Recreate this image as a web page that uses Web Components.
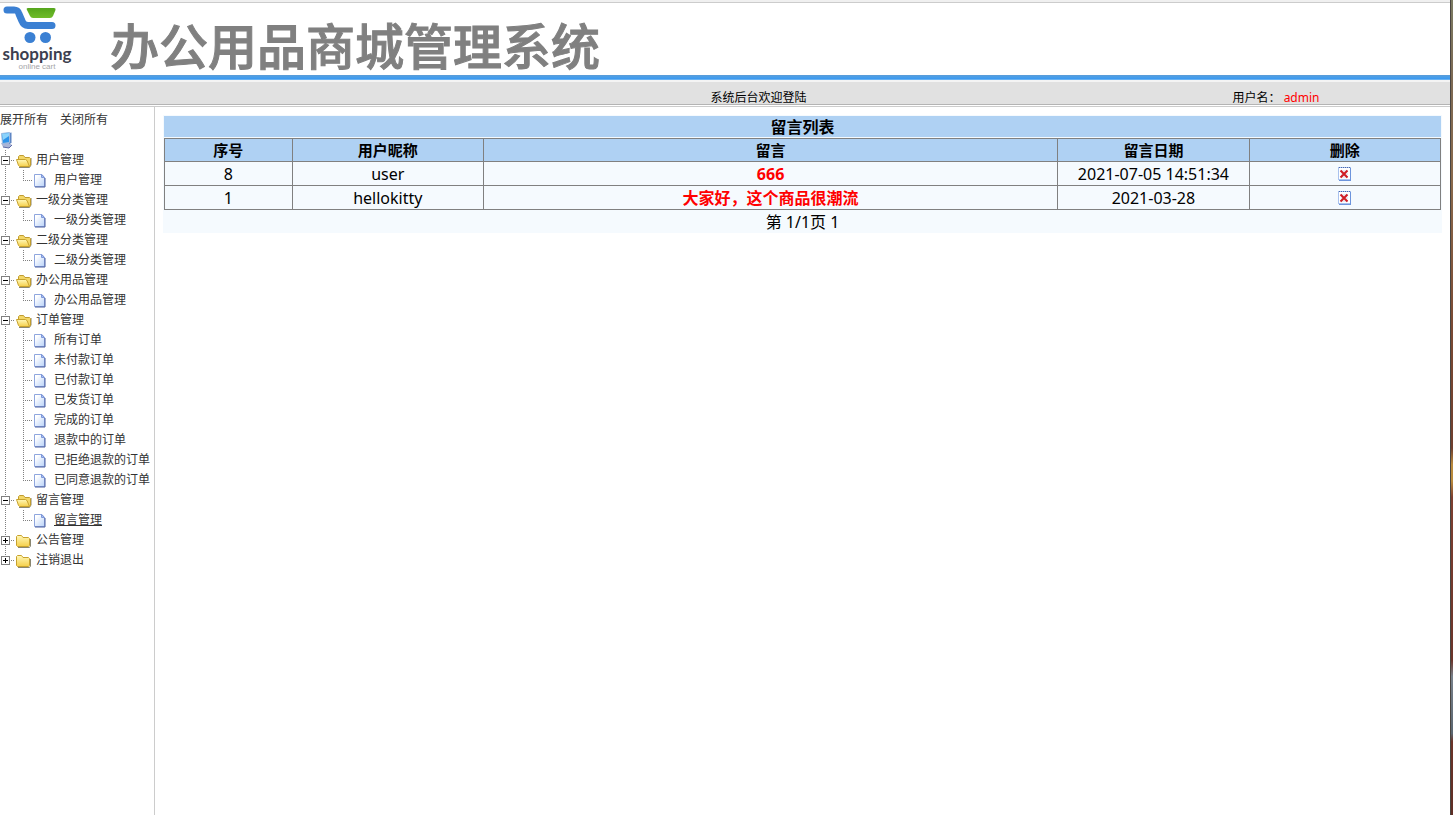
<!DOCTYPE html>
<html lang="zh-CN">
<head>
<meta charset="utf-8">
<title>办公用品商城管理系统</title>
<style>
    html, body {
        height: 100%;
        margin: 0;
    }

    body {
        font-family: "Noto Sans", "Noto Sans CJK SC", sans-serif;
        font-size: 16px;
        color: #000;
        background: #fff;
    }
</style>
</head>
<body>
<admin-shell>
    <admin-header slot="header" user="admin">办公用品商城管理系统</admin-header>

    <tree-menu slot="menu">
        <tree-branch label="用户管理" open>
            <tree-leaf last>用户管理</tree-leaf>
        </tree-branch>
        <tree-branch label="一级分类管理" open>
            <tree-leaf last>一级分类管理</tree-leaf>
        </tree-branch>
        <tree-branch label="二级分类管理" open>
            <tree-leaf last>二级分类管理</tree-leaf>
        </tree-branch>
        <tree-branch label="办公用品管理" open>
            <tree-leaf last>办公用品管理</tree-leaf>
        </tree-branch>
        <tree-branch label="订单管理" open>
            <tree-leaf>所有订单</tree-leaf>
            <tree-leaf>未付款订单</tree-leaf>
            <tree-leaf>已付款订单</tree-leaf>
            <tree-leaf>已发货订单</tree-leaf>
            <tree-leaf>完成的订单</tree-leaf>
            <tree-leaf>退款中的订单</tree-leaf>
            <tree-leaf>已拒绝退款的订单</tree-leaf>
            <tree-leaf last>已同意退款的订单</tree-leaf>
        </tree-branch>
        <tree-branch label="留言管理" open>
            <tree-leaf last current>留言管理</tree-leaf>
        </tree-branch>
        <tree-branch label="公告管理"></tree-branch>
        <tree-branch label="注销退出" last></tree-branch>
    </tree-menu>

    <message-table></message-table>
</admin-shell>

<script>
class AdminShell extends HTMLElement {
    constructor() {
        super();
        this.attachShadow({ mode: 'open' });
    }

    getStyles() {
        return `
            <style>
                :host {
                    display: grid;
                    grid-template-columns: 1fr 3px;
                    min-height: 100%;
                }

                .window {
                    display: flex;
                    flex-direction: column;
                    min-width: 0;
                }

                .frames {
                    display: flex;
                    flex: 1;
                    border-top: 1px solid #ccc;
                }

                nav {
                    width: 154px;
                    flex: none;
                    border-right: 1px solid #ccc;
                }

                main {
                    flex: 1;
                    min-width: 0;
                    padding: 8px;
                }

                .edge {
                    box-sizing: border-box;
                    border-left: 1px solid #4a4542;
                    background: linear-gradient(#7b7a62, #7d6a54 10%, #8a6a4c 22%, #7a4a34 40%, #6f3f2e 55%, #b98a3c 57%, #b98a3c 59%, #7d3f30 61%, #6b352b 81%, #77808a 83%, #5b6670 90%, #6b3328 91%, #5f2f26);
                }
            </style>
        `;
    }

    connectedCallback() {
        this.shadowRoot.innerHTML = `
            ${this.getStyles()}
            <div class="window">
                <slot name="header"></slot>
                <div class="frames">
                    <nav><slot name="menu"></slot></nav>
                    <main><slot></slot></main>
                </div>
            </div>
            <div class="edge"></div>
        `;
    }
}

class ShopLogo extends HTMLElement {
    constructor() {
        super();
        this.attachShadow({ mode: 'open' });
    }

    connectedCallback() {
        this.shadowRoot.innerHTML = `
            <style>
                :host {
                    display: block;
                }

                svg {
                    display: block;
                }
            </style>
            <svg width="76" height="72" viewBox="0 0 76 72">
                <defs>
                    <linearGradient id="basket" x1="0" y1="0" x2="0" y2="1">
                        <stop offset="0" stop-color="#55a51c"/>
                        <stop offset="1" stop-color="#70bc2a"/>
                    </linearGradient>
                </defs>
                <path d="M7 7H14C17 7 18 8 19 11L22 18C23 21 25 22.500 28 22.500H52" fill="none" stroke="#3b80d3" stroke-width="7" stroke-linecap="round" stroke-linejoin="round"/>
                <path d="M28 5H54Q56 5 55.500 7L53 13Q52 15 50 15H33Q31 15 30 13L27 7Q26 5 28 5Z" fill="url(#basket)"/>
                <circle cx="30" cy="34.500" r="5.500" fill="#3b80d3"/>
                <circle cx="45.500" cy="34.500" r="5.500" fill="#3b80d3"/>
                <text x="37" y="57" text-anchor="middle" font-family="Lato, sans-serif" font-size="17" font-weight="700" fill="#3c3f50">shopping</text>
                <text x="37" y="66" text-anchor="middle" font-family="'Liberation Sans', sans-serif" font-size="8" fill="#a5a5a8">online cart</text>
            </svg>
        `;
    }
}

class AdminHeader extends HTMLElement {
    constructor() {
        super();
        this.attachShadow({ mode: 'open' });
    }

    getStyles() {
        return `
            <style>
                :host {
                    display: block;
                    border-top: 2px solid #f0f0f0;
                }

                .banner {
                    display: flex;
                    align-items: center;
                    gap: 34px;
                    height: 72px;
                    border-top: 1px solid #ccc;
                }

                h1 {
                    margin: 0;
                    padding-top: 14px;
                    font-size: 49px;
                    font-weight: 500;
                    line-height: 56px;
                    white-space: nowrap;
                    color: #808080;
                    -webkit-text-stroke: 1px #808080;
                }

                .stripe {
                    height: 5px;
                    background: linear-gradient(#5b9bd5, #4a9fe8 40%, #3d9af0 70%, #7dbcf2);
                }

                .status {
                    display: grid;
                    grid-template-columns: 49% 36% 15%;
                    align-items: end;
                    height: 22px;
                    border-top: 2px solid #f4f4f4;
                    border-bottom: 1px solid #b4b4b4;
                    margin-bottom: 1px;
                    background: #e1e1e1;
                    font-size: 12px;
                    line-height: 12px;
                }

                .welcome {
                    grid-column: 2;
                }

                .user span {
                    color: #f00;
                }
            </style>
        `;
    }

    connectedCallback() {
        this.shadowRoot.innerHTML = `
            ${this.getStyles()}
            <div class="banner">
                <shop-logo></shop-logo>
                <h1><slot></slot></h1>
            </div>
            <div class="stripe"></div>
            <div class="status">
                <div class="welcome">系统后台欢迎登陆</div>
                <div class="user">用户名： <span>${this.getAttribute('user')}</span></div>
            </div>
        `;
    }
}

class TreeMenu extends HTMLElement {
    constructor() {
        super();
        this.attachShadow({ mode: 'open' });
    }

    getStyles() {
        return `
            <style>
                :host {
                    display: block;
                    padding-top: 3px;
                    font-size: 12px;
                    line-height: 20px;
                    color: #333;
                }

                .tools {
                    display: flex;
                    gap: 12px;
                }

                a {
                    color: inherit;
                    text-decoration: none;
                }

                svg {
                    display: block;
                }
            </style>
        `;
    }

    connectedCallback() {
        this.shadowRoot.innerHTML = `
            ${this.getStyles()}
            <div class="tools">
                <a href="#" id="open">展开所有</a>
                <a href="#" id="close">关闭所有</a>
            </div>
            <svg width="14" height="20" viewBox="0 0 14 20">
                <path d="M1 13L8 12L12 15L9 18L3 17Z" fill="#a9b4d6"/>
                <path d="M3 17L9 18L12 15" fill="none" stroke="#5d6aa5"/>
                <path d="M9 3L11.500 2.500V13L9 14Z" fill="#5f86c4"/>
                <path d="M1.500 3.500L9.500 2.500V12.500L2.500 13.500Z" fill="#2d94ea" stroke="#9dbbe0"/>
                <path d="M2 4L9 3V6L3 10Z" fill="#8bd3fb"/>
            </svg>
            <slot></slot>
        `;
        this.shadowRoot.getElementById('open').addEventListener('click', (e) => this.toggleAll(e, true));
        this.shadowRoot.getElementById('close').addEventListener('click', (e) => this.toggleAll(e, false));
    }

    toggleAll(event, open) {
        event.preventDefault();
        this.querySelectorAll('tree-branch').forEach((branch) => branch.toggleAttribute('open', open));
    }
}

class TreeBranch extends HTMLElement {
    static observedAttributes = ['open'];

    constructor() {
        super();
        this.attachShadow({ mode: 'open' });
    }

    getStyles() {
        // the dotted trunk runs down the left of every branch but the last
        return `
            <style>
                :host {
                    display: block;
                    background: repeating-linear-gradient(#808080 0 1px, transparent 1px 2px) 5px 0 / 1px 100% no-repeat;
                }

                :host([last]) {
                    background-size: 1px 10px;
                }

                .row {
                    display: flex;
                    height: 20px;
                }

                button {
                    display: block;
                    padding: 0;
                    border: 0;
                    background: none;
                }

                svg {
                    display: block;
                }

                a {
                    padding-left: 4px;
                    color: inherit;
                    line-height: 20px;
                    text-decoration: none;
                    white-space: nowrap;
                }

                .children {
                    padding-left: 14px;
                }
            </style>
        `;
    }

    getFolder(open) {
        const shade = `
            <defs>
                <linearGradient id="shade" x1="0" y1="0" x2="0" y2="1">
                    <stop offset="0" stop-color="#fff8b8"/>
                    <stop offset="1" stop-color="#f5cf4a"/>
                </linearGradient>
            </defs>
        `;

        if (open) {
            return `
                ${shade}
                <path d="M5 17.500H15.500L17 15V8" fill="none" stroke="#8a8670"/>
                <path d="M4.500 12V6.500L5.500 5.500H9.500L11 7.500H15.500L16.500 8.500V15.500L15 16.500Z" fill="#f3d768" stroke="#c09c30"/>
                <path d="M2.500 9.500H11.500L13 10.500L15.500 16.500H5.500L4.500 15.500Z" fill="url(#shade)" stroke="#c8a22c"/>
            `;
        }
        return `
            ${shade}
            <path d="M4 17.500H15.500L16.500 16V9" fill="none" stroke="#8a8670"/>
            <path d="M2.500 15.500V6.500L3.500 5.500H7.500L9 7.500H14.500L15.500 8.500V15.500L14.500 16.500H3.500Z" fill="url(#shade)" stroke="#c8a22c"/>
        `;
    }

    render() {
        const open = this.hasAttribute('open');
        const label = this.getAttribute('label');

        this.shadowRoot.innerHTML = `
            ${this.getStyles()}
            <div class="row">
                <button type="button" aria-label="${label}" aria-expanded="${open}">
                    <svg width="14" height="20" viewBox="0 0 14 20">
                        <path d="M11 10.500H14" stroke="#808080" stroke-dasharray="1 1"/>
                        <rect x="1.500" y="6.500" width="8" height="8" fill="#fff" stroke="#808080"/>
                        <path d="M3 10.500H8${open ? '' : 'M5.500 8V13'}" stroke="#000"/>
                    </svg>
                </button>
                <svg width="18" height="20" viewBox="0 0 18 20">${this.getFolder(open)}</svg>
                <a href="#">${label}</a>
            </div>
            ${open ? '<div class="children"><slot></slot></div>' : ''}
        `;
        this.shadowRoot.querySelector('button').addEventListener('click', () => this.toggleAttribute('open'));
    }

    connectedCallback() {
        this.render();
    }

    attributeChangedCallback() {
        if (this.isConnected) {
            this.render();
        }
    }
}

class TreeLeaf extends HTMLElement {
    constructor() {
        super();
        this.attachShadow({ mode: 'open' });
    }

    getStyles() {
        return `
            <style>
                :host {
                    display: flex;
                    height: 20px;
                }

                svg {
                    display: block;
                    flex: none;
                }

                a {
                    padding-left: 4px;
                    color: inherit;
                    line-height: 20px;
                    text-decoration: none;
                    white-space: nowrap;
                }

                :host([current]) a,
                a:hover {
                    text-decoration: underline;
                }
            </style>
        `;
    }

    connectedCallback() {
        const end = this.hasAttribute('last') ? 11 : 20;

        this.shadowRoot.innerHTML = `
            ${this.getStyles()}
            <svg width="18" height="20" viewBox="0 0 18 20">
                <path d="M9.500 0V${end}M11 10.500H18" stroke="#808080" stroke-dasharray="1 1"/>
            </svg>
            <svg width="18" height="20" viewBox="0 0 18 20">
                <defs>
                    <linearGradient id="paper" x1="0" y1="0" x2="1" y2="1">
                        <stop offset="0.200" stop-color="#fff"/>
                        <stop offset="1" stop-color="#b9d2f8"/>
                    </linearGradient>
                </defs>
                <path d="M2.500 4.500H10L12.500 7.500V16.500H2.500Z" fill="url(#paper)" stroke="#8fa6de"/>
                <path d="M9.500 4.500V7.500H12.500Z" fill="#a9c0f0" stroke="#7f98d8"/>
                <path d="M3 17H13V8" fill="none" stroke="#4a5f9e"/>
            </svg>
            <a href="#"><slot></slot></a>
        `;
    }
}

class MessageTable extends HTMLElement {
    constructor() {
        super();
        this.attachShadow({ mode: 'open' });
        this.messages = [
            { id: 8, name: 'user', text: '666', date: '2021-07-05 14:51:34' },
            { id: 1, name: 'hellokitty', text: '大家好，这个商品很潮流', date: '2021-03-28' }
        ];
    }

    getStyles() {
        return `
            <style>
                :host {
                    display: block;
                    padding: 1px 1px 0;
                    background: #f5fafe;
                    text-align: center;
                }

                h2 {
                    margin: 0 0 1px;
                    padding-top: 1px;
                    font-size: 16px;
                    line-height: 20px;
                    background: #afd1f3;
                }

                table {
                    width: 100%;
                    table-layout: fixed;
                    border-collapse: collapse;
                }

                th, td {
                    box-sizing: border-box;
                    padding: 2px 0 0;
                    border: 1px solid #808080;
                    line-height: 21px;
                }

                th {
                    padding: 0;
                    font-size: 15px;
                    line-height: 22px;
                    background: #afd1f3;
                }

                .narrow {
                    width: 10%;
                }

                .medium {
                    width: 15%;
                }

                .text {
                    color: #f00;
                    font-weight: bold;
                }

                .action {
                    padding: 0;
                }

                button {
                    display: block;
                    margin: 0 auto;
                    padding: 0;
                    border: 0;
                    background: none;
                }

                svg {
                    display: block;
                }

                .pager {
                    padding-top: 2px;
                    line-height: 21px;
                }
            </style>
        `;
    }

    getRow(message) {
        return `
            <tr>
                <td>${message.id}</td>
                <td>${message.name}</td>
                <td class="text">${message.text}</td>
                <td>${message.date}</td>
                <td class="action">
                    <button type="button" aria-label="删除">
                        <svg width="13" height="14" viewBox="0 0 13 14">
                            <rect x="0.500" y="0.500" width="12" height="12" fill="#fff" stroke="#a9c2ee"/>
                            <path d="M1 0.500H12" stroke="#4a68ac" stroke-dasharray="1 1"/>
                            <path d="M12.500 1V13.500M1 13.500H13" fill="none" stroke="#6d94dc"/>
                            <path d="M3 4H10M3 7H10M3 10H10" stroke="#d4dae8"/>
                            <path d="M2.500 3.500L9.500 10.500M9.500 3.500L2.500 10.500" stroke="#d01c24" stroke-width="2"/>
                        </svg>
                    </button>
                </td>
            </tr>
        `;
    }

    connectedCallback() {
        this.shadowRoot.innerHTML = `
            ${this.getStyles()}
            <h2>留言列表</h2>
            <table>
                <thead>
                    <tr>
                        <th class="narrow">序号</th>
                        <th class="medium">用户昵称</th>
                        <th>留言</th>
                        <th class="medium">留言日期</th>
                        <th class="medium">删除</th>
                    </tr>
                </thead>
                <tbody>${this.messages.map((message) => this.getRow(message)).join('')}</tbody>
            </table>
            <div class="pager">第 1/1页 1</div>
        `;
    }
}

customElements.define('shop-logo', ShopLogo);
customElements.define('admin-header', AdminHeader);
customElements.define('tree-menu', TreeMenu);
customElements.define('tree-branch', TreeBranch);
customElements.define('tree-leaf', TreeLeaf);
customElements.define('message-table', MessageTable);
customElements.define('admin-shell', AdminShell);
</script>
</body>
</html>
